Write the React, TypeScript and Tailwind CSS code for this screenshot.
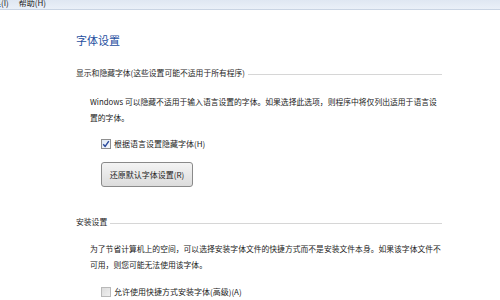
import React from 'react';

const font = { fontFamily: '"Noto Sans CJK SC", "Noto Sans", sans-serif' };

const SectionHeader: React.FC<{ label: string; className?: string }> = ({ label, className }) => (
  <div className={`flex items-center gap-[3px] h-[12px] leading-[12px] text-[7.8px] text-[#1e1e1e] ${className || ''}`}>
    <span className="whitespace-nowrap">{label}</span>
    <div className="flex-1 border-t border-[#d6d6d6] mt-[3px]"></div>
  </div>
);

const Checkbox: React.FC<{ checked: boolean; label: string; className?: string }> = ({ checked, label, className }) => (
  <label className={`flex items-center gap-[3px] h-[12px] ml-[25px] text-[8px] text-[#222] ${className || ''}`}>
    <span
      className={`w-[10px] h-[10px] border flex items-center justify-center ${
        checked ? 'border-[#8f8f8f] bg-gradient-to-br from-[#dfe9f5] to-[#f5f8fc]' : 'border-[#b9b9b9] bg-gradient-to-br from-[#dcdcdc] to-[#f0f0f0]'
      }`}
    >
      {checked && (
        <svg viewBox="0 0 10 10" className="w-[8px] h-[8px]">
          <path d="M1.5 5.2 L4 8 L8.5 1.5" fill="none" stroke="#2a4a9c" strokeWidth="1.8" strokeLinejoin="round" />
        </svg>
      )}
    </span>
    <span className="leading-[12px] whitespace-nowrap">{label}</span>
  </label>
);

const App: React.FC = () => {
  return (
    <div className="w-[500px] h-[300px] bg-white overflow-hidden" style={font}>
      {/* Menu bar */}
      <div className="h-[10px] bg-gradient-to-b from-[#dfe7f2] to-[#eaf0f8] border-b border-[#c9d4e3] flex items-end overflow-hidden">
        <div className="flex gap-[10px] -ml-[15px] text-[8px] leading-[10px] text-[#222] pb-[1px]">
          <span>工具(I)</span>
          <span>帮助(H)</span>
        </div>
      </div>

      <div className="pl-[76px] w-[442px]">
        <h1 className="mt-[23px] text-[11px] leading-[14px] text-[#1f4f9f]">字体设置</h1>

        <SectionHeader label="显示和隐藏字体(这些设置可能不适用于所有程序)" className="mt-[20px]" />

        <p className="mt-[15px] pl-[14px] text-[7.8px] leading-[16px] text-[#222]">
          Windows 可以隐藏不适用于输入语言设置的字体。如果选择此选项，则程序中将仅列出适用于语言设置的字体。
        </p>

        <Checkbox checked label="根据语言设置隐藏字体(H)" className="mt-[12px]" />

        <button className="mt-[12px] ml-[25px] w-[92px] h-[25px] border border-[#8a8a8a] rounded-[3px] bg-gradient-to-b from-[#f4f4f4] to-[#dcdcdc] text-[8px] text-[#222] flex items-center justify-center">
          还原默认字体设置(R)
        </button>

        <SectionHeader label="安装设置" className="mt-[29px]" />

        <p className="mt-[13px] pl-[14px] text-[7.8px] leading-[16px] text-[#222]">
          为了节省计算机上的空间，可以选择安装字体文件的快捷方式而不是安装文件本身。如果该字体文件不可用，则您可能无法使用该字体。
        </p>

        <Checkbox checked={false} label="允许使用快捷方式安装字体(高级)(A)" className="mt-[13px]" />
      </div>
    </div>
  );
};

export default App;
